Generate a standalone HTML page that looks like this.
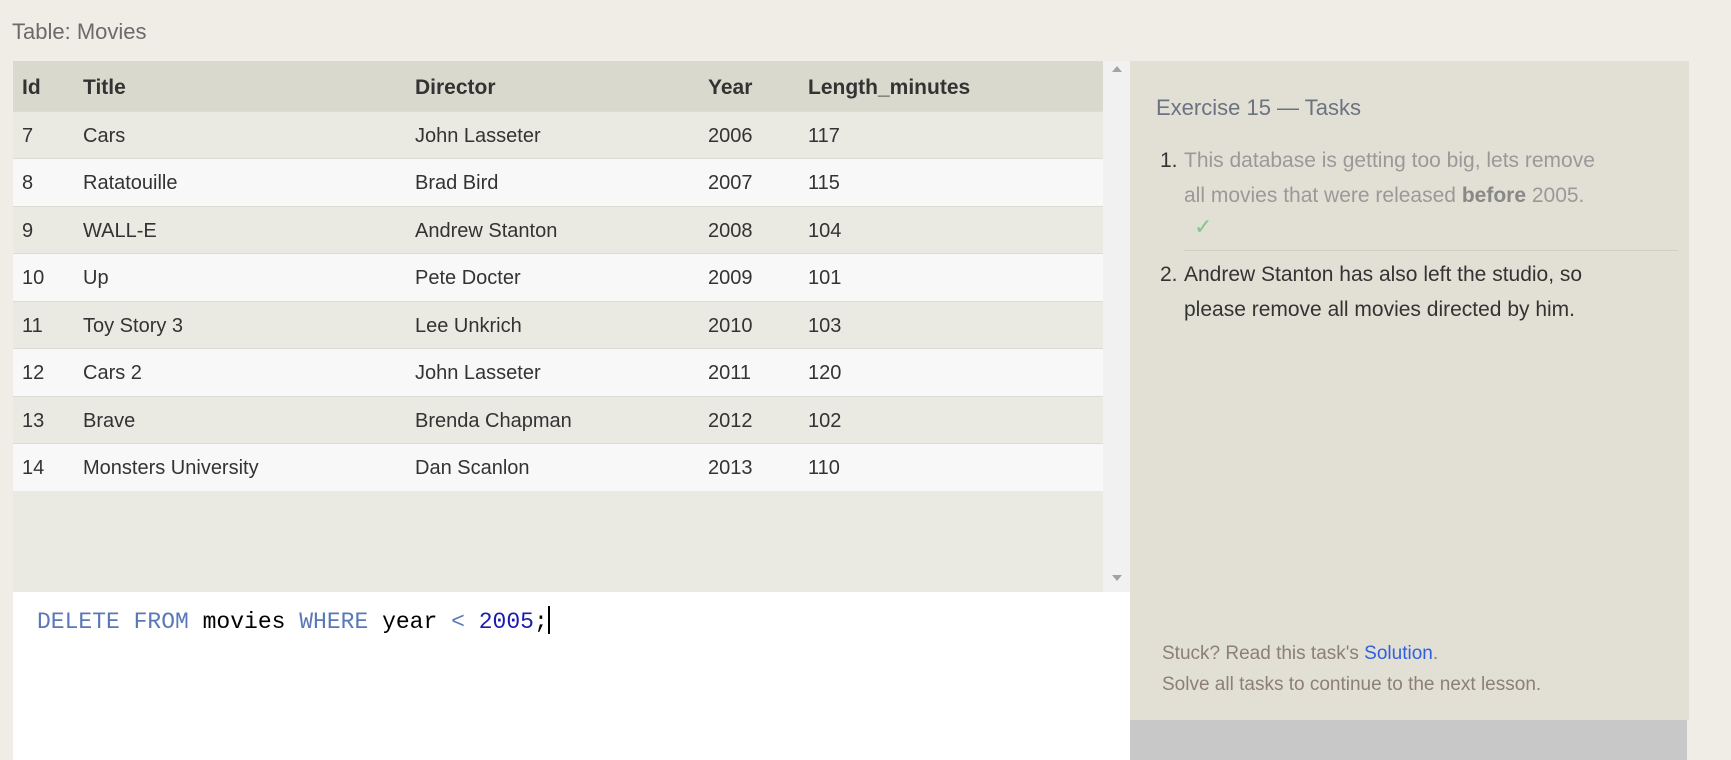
<!DOCTYPE html>
<html><head><meta charset="utf-8"><style>
*{margin:0;padding:0;box-sizing:border-box}
body{width:1731px;height:760px;overflow:hidden;background:#f0ede6;font-family:"Liberation Sans",sans-serif;position:relative}
.abs{position:absolute}
.title{left:12px;top:19px;font-size:22px;color:#6b6b6b}
.tbl{left:13px;top:61px;width:1090px;height:531px;background:#eae9e2}
.row{position:absolute;left:0;width:1090px;height:48px;font-size:20px;color:#333}
.row span{position:absolute;top:13px}
.hdr{background:#dad9ce;height:50px;font-weight:bold;font-size:21px;color:#333}
.hdr span{top:15px}
.odd{background:#eae9e2;border-top:1px solid #dcdcd4}
.even{background:#f8f8f8;border-top:1px solid #dcdcd4}
.c1{left:9px}.c2{left:70px}.c3{left:402px}.c4{left:695px}.c5{left:795px}
.sb{left:1103px;top:61px;width:27px;height:531px;background:#f1f1f1}
.editor{left:13px;top:592px;width:1117px;height:168px;background:#fff}
.code{left:37px;top:606px;font-family:"Liberation Mono",monospace;font-size:23px;color:#000;white-space:pre}
.kw{color:#5a78b8}.num{color:#1a1ab0}
.cur{display:inline-block;width:2px;height:28px;background:#000;vertical-align:-6px}
.panel{left:1130px;top:61px;width:559px;height:659px;background:#e2e0d5}
.gray{left:1130px;top:720px;width:557px;height:40px;background:#c8c8c8}
.li{font-size:21px;line-height:35px}
</style></head><body>
<div class="abs title">Table: Movies</div>
<div class="abs tbl">
 <div class="row hdr" style="top:0"><span class="c1">Id</span><span class="c2">Title</span><span class="c3">Director</span><span class="c4">Year</span><span class="c5">Length_minutes</span></div>
 <div class="row odd" style="top:50px"><span class="c1">7</span><span class="c2">Cars</span><span class="c3">John Lasseter</span><span class="c4">2006</span><span class="c5">117</span></div>
 <div class="row even" style="top:97px"><span class="c1">8</span><span class="c2">Ratatouille</span><span class="c3">Brad Bird</span><span class="c4">2007</span><span class="c5">115</span></div>
 <div class="row odd" style="top:145px"><span class="c1">9</span><span class="c2">WALL-E</span><span class="c3">Andrew Stanton</span><span class="c4">2008</span><span class="c5">104</span></div>
 <div class="row even" style="top:192px"><span class="c1">10</span><span class="c2">Up</span><span class="c3">Pete Docter</span><span class="c4">2009</span><span class="c5">101</span></div>
 <div class="row odd" style="top:240px"><span class="c1">11</span><span class="c2">Toy Story 3</span><span class="c3">Lee Unkrich</span><span class="c4">2010</span><span class="c5">103</span></div>
 <div class="row even" style="top:287px"><span class="c1">12</span><span class="c2">Cars 2</span><span class="c3">John Lasseter</span><span class="c4">2011</span><span class="c5">120</span></div>
 <div class="row odd" style="top:335px"><span class="c1">13</span><span class="c2">Brave</span><span class="c3">Brenda Chapman</span><span class="c4">2012</span><span class="c5">102</span></div>
 <div class="row even" style="top:382px"><span class="c1">14</span><span class="c2">Monsters University</span><span class="c3">Dan Scanlon</span><span class="c4">2013</span><span class="c5">110</span></div>
</div>
<div class="abs sb">
 <svg class="abs" style="left:9px;top:5px" width="10" height="6"><path d="M0 6 L5 0 L10 6Z" fill="#a3a3a3"/></svg>
 <svg class="abs" style="left:9px;top:514px" width="10" height="6"><path d="M0 0 L5 6 L10 0Z" fill="#a3a3a3"/></svg>
</div>
<div class="abs editor"></div>
<div class="abs code"><span class="kw">DELETE FROM</span> movies <span class="kw">WHERE</span> year <span class="kw">&lt;</span> <span class="num">2005</span>;<span class="cur"></span></div>
<div class="abs panel"></div>
<div class="abs" style="left:1156px;top:95px;font-size:22px;color:#6b7383">Exercise 15 — Tasks</div>
<div class="abs li" style="left:1160px;top:143px;color:#333">1.</div>
<div class="abs li" style="left:1184px;top:143px;color:#999;width:520px">This database is getting too big, lets remove<br>all movies that were released <b style="color:#888">before</b> 2005.</div>
<div class="abs" style="left:1194px;top:214px;font-size:22px;color:#7cc98a">✓</div>
<div class="abs" style="left:1184px;top:250px;width:494px;height:1px;background:#d2d0c4"></div>
<div class="abs li" style="left:1160px;top:257px;color:#333">2.</div>
<div class="abs li" style="left:1184px;top:257px;color:#333;width:520px">Andrew Stanton has also left the studio, so<br>please remove all movies directed by him.</div>
<div class="abs" style="left:1162px;top:638px;font-size:19px;color:#8b7f78;line-height:31px">Stuck? Read this task's <span style="color:#2f5fe0">Solution</span>.<br>Solve all tasks to continue to the next lesson.</div>
<div class="abs gray"></div>
</body></html>
